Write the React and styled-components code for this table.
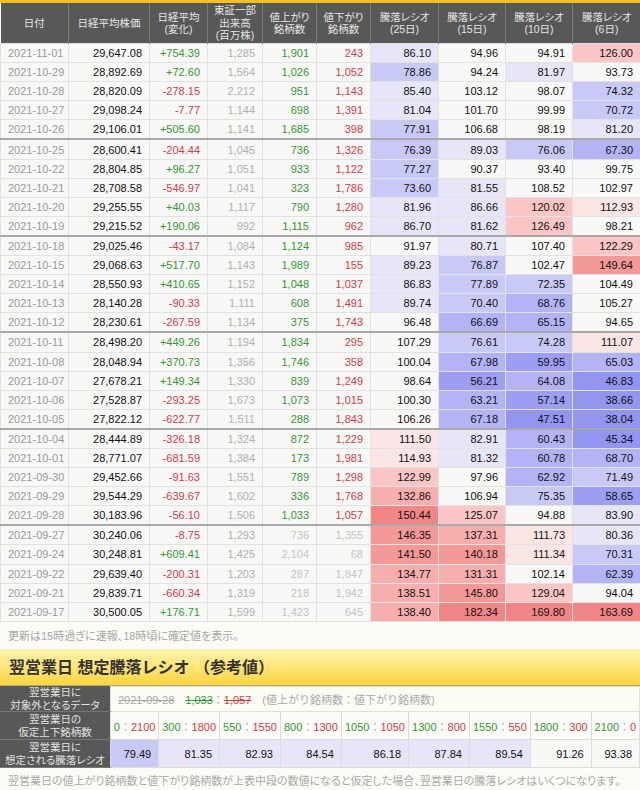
import React from 'react';
import styled, { createGlobalStyle } from 'styled-components';

const GlobalStyle = createGlobalStyle`
  body {
    margin: 0;
    background: #fbfbf8;
    font-family: "Liberation Sans", "Noto Sans CJK JP", sans-serif;
    font-feature-settings: "palt";
  }
`;

const GREEN = '#339933';
const RED = '#d23c4a';

const Page = styled.div`
  width: 640px;
`;

const TopStrip = styled.div`
  height: 3px;
  background: #f3c31c;
`;

const DataTable = styled.table`
  width: 640px;
  border-collapse: collapse;
  table-layout: fixed;
`;

const HeadCell = styled.th`
  background: #585858;
  color: #e4e4e4;
  font-weight: normal;
  font-size: 10.5px;
  line-height: 12.5px;
  height: 40px;
  padding: 0;
  border-left: 1px solid #7a7a7a;
  &:first-child { border-left: none; }
`;

const Cell = styled.td`
  height: 18.1px;
  padding: 0 7px;
  font-size: 11px;
  line-height: 18px;
  white-space: nowrap;
  text-align: ${p => p.$center ? 'center' : 'right'};
  color: ${p => p.$tone || '#111'};
  background: ${p => p.$bg || '#f8f8f6'};
  border: 1px solid #e2e2e0;
  border-top: ${p => p.$week ? '2px solid #a9a9a9' : '1px solid #e2e2e0'};
`;

const Note = styled.div`
  height: 27px;
  line-height: 28px;
  padding: 0 8px;
  font-size: 11px;
  color: #a8a8a8;
`;

const SectionTitle = styled.h2`
  margin: 0;
  height: 36px;
  line-height: 37px;
  padding: 0 9px;
  font-size: 16px;
  font-weight: bold;
  color: #333;
  font-feature-settings: normal;
  background: linear-gradient(#fff3ae, #fcd640);
  border-bottom: 1px solid #b0a680;
`;

const ForecastTable = styled.table`
  width: 640px;
  border-collapse: collapse;
`;

const LabelCell = styled.th`
  width: 110px;
  padding: 0;
  background: #585858;
  color: #e2e2e2;
  font-weight: normal;
  font-size: 10.5px;
  line-height: 12.5px;
  border-bottom: 1px solid #777;
`;

const InfoCell = styled.td`
  height: ${p => p.$h || 27}px;
  padding: 0 7px;
  font-size: 11px;
  color: #aaa;
  background: #fdfdf6;
  border: 1px solid #e0e0dc;
  white-space: nowrap;
  font-feature-settings: normal;
`;

const PairCell = styled.td`
  height: 27px;
  padding: 0 2px;
  font-size: 11px;
  white-space: nowrap;
  text-align: center;
  color: #aaa;
  background: #fbfbf8;
  border: 1px solid #dcdcd8;
  font-feature-settings: normal;
`;

const ValueCell = styled.td`
  height: 27px;
  padding: 0 7px;
  font-size: 11px;
  text-align: right;
  color: #111;
  background: ${p => p.$bg || '#f8f8f6'};
  border: 1px solid #dcdcd8;
`;

const Num = styled.span`
  color: ${p => p.$tone};
  text-decoration: ${p => p.$strike ? 'line-through' : 'none'};
`;

const Footer = styled.div`
  padding: 5px 8px 0;
  font-size: 11px;
  line-height: 16px;
  color: #aaa;
  white-space: nowrap;
`;

const ratioBg = v => {
  if (v < 50) return '#9494f1';
  if (v < 60) return '#9d9df2';
  if (v < 70) return '#b3b3f5';
  if (v < 80) return '#c9c9f8';
  if (v < 90) return '#e6e6f8';
  if (v < 110) return null;
  if (v < 120) return '#fbe5e5';
  if (v < 130) return '#fcc6c6';
  if (v < 140) return '#f9aeae';
  if (v < 150) return '#f59898';
  return '#f28686';
};

const rows = [
  ['2021-11-01', '29,647.08', '+754.39', '1,285', '1,901', '243', 86.10, 94.96, 94.91, 126.00],
  ['2021-10-29', '28,892.69', '+72.60', '1,564', '1,026', '1,052', 78.86, 94.24, 81.97, 93.73],
  ['2021-10-28', '28,820.09', '-278.15', '2,212', '951', '1,143', 85.40, 103.12, 98.07, 74.32],
  ['2021-10-27', '29,098.24', '-7.77', '1,144', '698', '1,391', 81.04, 101.70, 99.99, 70.72],
  ['2021-10-26', '29,106.01', '+505.60', '1,141', '1,685', '398', 77.91, 106.68, 98.19, 81.20],
  ['2021-10-25', '28,600.41', '-204.44', '1,045', '736', '1,326', 76.39, 89.03, 76.06, 67.30, 'week'],
  ['2021-10-22', '28,804.85', '+96.27', '1,051', '933', '1,122', 77.27, 90.37, 93.40, 99.75],
  ['2021-10-21', '28,708.58', '-546.97', '1,041', '323', '1,786', 73.60, 81.55, 108.52, 102.97],
  ['2021-10-20', '29,255.55', '+40.03', '1,117', '790', '1,280', 81.96, 86.66, 120.02, 112.93],
  ['2021-10-19', '29,215.52', '+190.06', '992', '1,115', '962', 86.70, 81.62, 126.49, 98.21],
  ['2021-10-18', '29,025.46', '-43.17', '1,084', '1,124', '985', 91.97, 80.71, 107.40, 122.29, 'week'],
  ['2021-10-15', '29,068.63', '+517.70', '1,143', '1,989', '155', 89.23, 76.87, 102.47, 149.64],
  ['2021-10-14', '28,550.93', '+410.65', '1,152', '1,048', '1,037', 86.83, 77.89, 72.35, 104.49],
  ['2021-10-13', '28,140.28', '-90.33', '1,111', '608', '1,491', 89.74, 70.40, 68.76, 105.27],
  ['2021-10-12', '28,230.61', '-267.59', '1,134', '375', '1,743', 96.48, 66.69, 65.15, 94.65],
  ['2021-10-11', '28,498.20', '+449.26', '1,194', '1,834', '295', 107.29, 76.61, 74.28, 111.07, 'week'],
  ['2021-10-08', '28,048.94', '+370.73', '1,356', '1,746', '358', 100.04, 67.98, 59.95, 65.03],
  ['2021-10-07', '27,678.21', '+149.34', '1,330', '839', '1,249', 98.64, 56.21, 64.08, 46.83],
  ['2021-10-06', '27,528.87', '-293.25', '1,673', '1,073', '1,015', 100.30, 63.21, 57.14, 38.66],
  ['2021-10-05', '27,822.12', '-622.77', '1,511', '288', '1,843', 106.26, 67.18, 47.51, 38.04],
  ['2021-10-04', '28,444.89', '-326.18', '1,324', '872', '1,229', 111.50, 82.91, 60.43, 45.34, 'week'],
  ['2021-10-01', '28,771.07', '-681.59', '1,384', '173', '1,981', 114.93, 81.32, 60.78, 68.70],
  ['2021-09-30', '29,452.66', '-91.63', '1,551', '789', '1,298', 122.99, 97.96, 62.92, 71.49],
  ['2021-09-29', '29,544.29', '-639.67', '1,602', '336', '1,768', 132.86, 106.94, 75.35, 58.65],
  ['2021-09-28', '30,183.96', '-56.10', '1,506', '1,033', '1,057', 150.44, 125.07, 94.88, 83.90],
  ['2021-09-27', '30,240.06', '-8.75', '1,293', '736', '1,355', 146.35, 137.31, 111.73, 80.36, 'week', 'old'],
  ['2021-09-24', '30,248.81', '+609.41', '1,425', '2,104', '68', 141.50, 140.18, 111.34, 70.31, null, 'old'],
  ['2021-09-22', '29,639.40', '-200.31', '1,203', '287', '1,847', 134.77, 131.31, 102.14, 62.39, null, 'old'],
  ['2021-09-21', '29,839.71', '-660.34', '1,319', '218', '1,942', 138.51, 145.80, 129.04, 94.04, null, 'old'],
  ['2021-09-17', '30,500.05', '+176.71', '1,599', '1,423', '645', 138.40, 182.34, 169.80, 163.69, null, 'old'],
];

const pairs = [
  [0, 2100], [300, 1800], [550, 1550], [800, 1300], [1050, 1050],
  [1300, 800], [1550, 550], [1800, 300], [2100, 0],
];
const forecast = [79.49, 81.35, 82.93, 84.54, 86.18, 87.84, 89.54, 91.26, 93.38];

const widths = [68, 81, 58, 55, 54, 54, 68, 67, 67, 68];

function App() {
  return (
    <Page>
      <GlobalStyle />
      <TopStrip />
      <DataTable>
        <colgroup>
          {widths.map((w, i) => <col key={i} style={{ width: w }} />)}
        </colgroup>
        <thead>
          <tr>
            <HeadCell>日付</HeadCell>
            <HeadCell>日経平均株価</HeadCell>
            <HeadCell>日経平均<br />(変化)</HeadCell>
            <HeadCell>東証一部<br />出来高<br />(百万株)</HeadCell>
            <HeadCell>値上がり<br />銘柄数</HeadCell>
            <HeadCell>値下がり<br />銘柄数</HeadCell>
            <HeadCell>騰落レシオ<br />(25日)</HeadCell>
            <HeadCell>騰落レシオ<br />(15日)</HeadCell>
            <HeadCell>騰落レシオ<br />(10日)</HeadCell>
            <HeadCell>騰落レシオ<br />(6日)</HeadCell>
          </tr>
        </thead>
        <tbody>
          {rows.map(r => {
            const week = r[10] === 'week';
            const old = r[11] === 'old';
            return (
              <tr key={r[0]}>
                <Cell $week={week} $center $tone="#9a9a9a">{r[0]}</Cell>
                <Cell $week={week}>{r[1]}</Cell>
                <Cell $week={week} $tone={r[2][0] === '+' ? GREEN : RED}>{r[2]}</Cell>
                <Cell $week={week} $tone="#b0b0b0">{r[3]}</Cell>
                <Cell $week={week} $tone={old ? '#c4c4c4' : GREEN}>{r[4]}</Cell>
                <Cell $week={week} $tone={old ? '#c4c4c4' : RED}>{r[5]}</Cell>
                {r.slice(6, 10).map((v, i) => (
                  <Cell key={i} $week={week} $bg={ratioBg(v)}>{v.toFixed(2)}</Cell>
                ))}
              </tr>
            );
          })}
        </tbody>
      </DataTable>
      <Note>更新は15時過ぎに速報、18時頃に確定値を表示。</Note>
      <SectionTitle>翌営業日 想定騰落レシオ （参考値）</SectionTitle>
      <ForecastTable>
        <tbody>
          <tr>
            <LabelCell>翌営業日に<br />対象外となるデータ</LabelCell>
            <InfoCell colSpan={9} $h={24}>
              <Num $tone="#aaa" $strike>2021-09-28</Num>
              {'\u2003'}
              <Num $tone={GREEN} $strike>1,033</Num>
              <Num $tone="#aaa">：</Num>
              <Num $tone={RED} $strike>1,057</Num>
              {'\u2003'}
              (値上がり銘柄数：値下がり銘柄数)
            </InfoCell>
          </tr>
          <tr>
            <LabelCell>翌営業日の<br />仮定上下銘柄数</LabelCell>
            {pairs.map(([u, d]) => (
              <PairCell key={u}>
                <Num $tone={GREEN}>{u}</Num>：<Num $tone={RED}>{d}</Num>
              </PairCell>
            ))}
          </tr>
          <tr>
            <LabelCell>翌営業日に<br />想定される騰落レシオ</LabelCell>
            {forecast.map(v => (
              <ValueCell key={v} $bg={ratioBg(v)}>{v.toFixed(2)}</ValueCell>
            ))}
          </tr>
        </tbody>
      </ForecastTable>
      <Footer>翌営業日の値上がり銘柄数と値下がり銘柄数が上表中段の数値になると仮定した場合、翌営業日の騰落レシオはいくつになります。</Footer>
    </Page>
  );
}

export default App;
